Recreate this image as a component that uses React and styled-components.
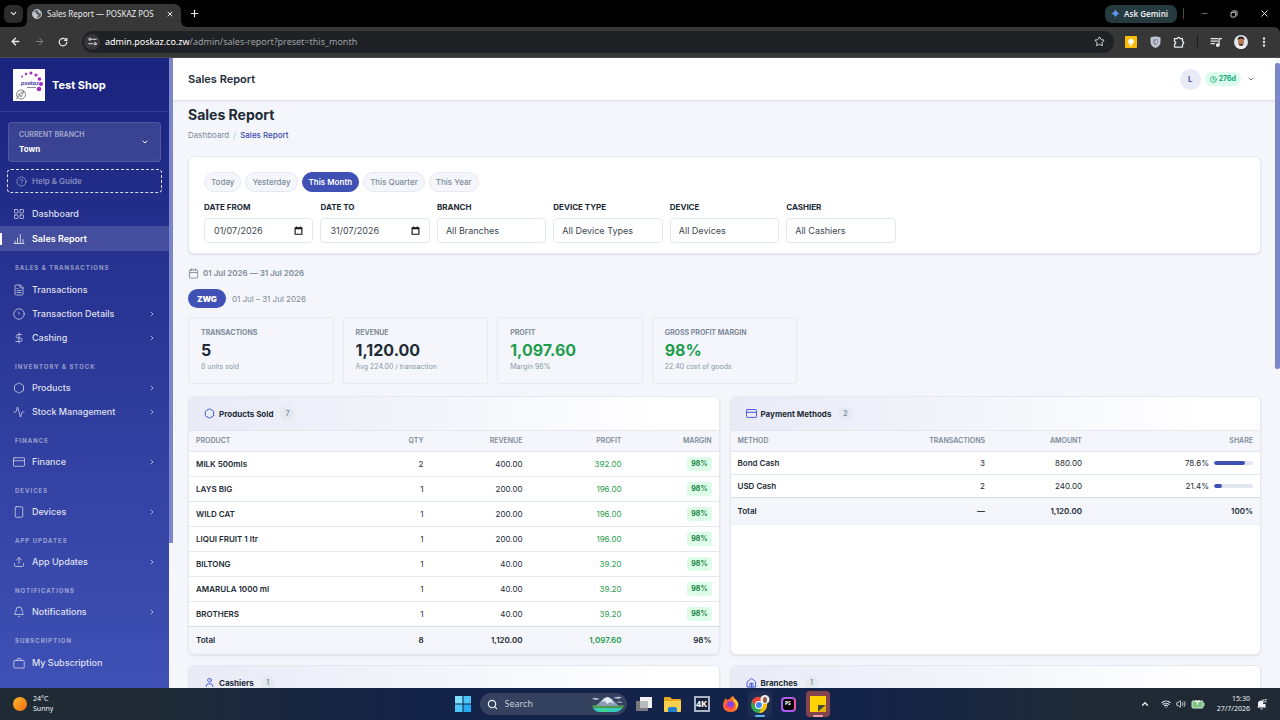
import React from 'react';
import styled, {createGlobalStyle, css} from 'styled-components';
import {
  Activity,
  ArrowLeft,
  ArrowRight,
  Bell,
  Calendar,
  ChevronDown,
  ChevronRight,
  ChevronUp,
  CircleHelp,
  Clock,
  DollarSign,
  EllipsisVertical,
  FileText,
  Hexagon,
  LayoutGrid,
  Minus,
  Plus,
  RotateCw,
  Search,
  Star,
  Upload,
  User,
  Volume2,
  Wifi,
  X,
} from 'lucide-react';

const GlobalStyle = createGlobalStyle`
  * {
    box-sizing: border-box;
  }

  body {
    margin: 0;
    font-family: Inter, 'Liberation Sans', sans-serif;
    font-size: 8px;
    line-height: 12px;
    color: #212b36;
    overflow: hidden;
  }

  button, input, select {
    font: inherit;
    color: inherit;
  }

  button {
    border: 0;
    padding: 0;
    background: none;
  }

  a {
    color: inherit;
    text-decoration: none;
  }

  svg {
    display: block;
    flex: none;
  }
`;

const Screen = styled.div`
  height: 100vh;
  display: flex;
  flex-direction: column;
`;

/* Browser */

const TabStrip = styled.div`
  display: flex;
  align-items: center;
  height: 27px;
  flex: none;
  padding: 0 10px 0 4px;
  background: #000;
  color: #e8eaed;
  font-family: 'Noto Sans', sans-serif;
`;

const TabSearch = styled.button`
  display: grid;
  place-items: center;
  width: 19px;
  height: 18px;
  border-radius: 6px;
  background: #2c2c2c;
`;

const Tab = styled.div`
  position: relative;
  align-self: flex-end;
  display: flex;
  align-items: center;
  gap: 5px;
  width: 154px;
  height: 23px;
  margin-left: 4px;
  padding: 0 7px 3px 5px;
  border-radius: 7px 7px 0 0;
  background: #373737;

  &::before, &::after {
    content: '';
    position: absolute;
    bottom: 0;
    width: 6px;
    height: 6px;
  }

  &::before {
    right: 100%;
    background: radial-gradient(circle at 0 0, #000 6px, #373737 6px);
  }

  &::after {
    left: 100%;
    background: radial-gradient(circle at 100% 0, #000 6px, #373737 6px);
  }
`;

const TabTitle = styled.span`
  flex: 1;
  white-space: nowrap;
`;

const IconButton = styled.button`
  display: grid;
  place-items: center;
  width: ${({$width}) => $width || 12}px;
  height: 18px;
`;

const Grow = styled.div`
  flex: 1;
`;

const Gemini = styled.button`
  display: flex;
  align-items: center;
  gap: 4px;
  height: 18px;
  margin-right: 6px;
  padding: 0 9px 0 6px;
  border-radius: 7px;
  background: #253b40;
  font-weight: 600;
`;

const Divider = styled.i`
  width: 1px;
  height: 11px;
  background: ${({$color}) => $color};
`;

const WindowButtons = styled.div`
  display: flex;
  gap: 18px;
  margin-left: 14px;
`;

const Toolbar = styled.div`
  display: flex;
  align-items: center;
  height: 31px;
  flex: none;
  padding: 0 10px 1px 9px;
  border-bottom: 1px solid #4a4a4a;
  border-top-right-radius: 6px;
  background: #373737;
  color: #e8eaed;
  font-family: 'Noto Sans', sans-serif;
`;

const BrowserBar = styled.div`
  flex: none;
  background: #000;
`;

const NavButtons = styled.div`
  display: flex;
  gap: 12px;
  margin-right: 13px;
`;

const AddressBar = styled.div`
  flex: 1;
  display: flex;
  align-items: center;
  height: 22px;
  padding: 0 9px 0 2px;
  border-radius: 11px;
  background: #202124;
`;

const SiteInfo = styled.button`
  display: grid;
  place-items: center;
  width: 16px;
  height: 16px;
  margin-right: 5px;
  border-radius: 50%;
  background: #373737;
`;

const Url = styled.span`
  flex: 1;
  font-size: 9px;
  color: #9aa0a6;

  b {
    font-weight: 400;
    color: #fff;
  }
`;

const Extensions = styled.div`
  display: flex;
  align-items: center;
  gap: 12px;
  margin-left: 11px;
`;

/* App shell */

const Shell = styled.div`
  flex: 1;
  min-height: 0;
  display: flex;
  background: #f4f6fb;
`;

const Sidebar = styled.aside`
  width: 169px;
  flex: none;
  overflow: hidden;
  background: linear-gradient(180deg, #1a237e 0%, #3f51b5 100%);
  color: #fff;
`;

const ScrollTrack = styled.div`
  width: ${({$width}) => $width}px;
  flex: none;
  padding-top: ${({$top}) => $top || 0}px;
`;

const ScrollThumb = styled.div`
  height: ${({$size}) => $size}%;
  border-radius: ${({$round}) => $round || 0}px;
  background: #7b86cb;
`;

const Brand = styled.div`
  display: flex;
  align-items: center;
  gap: 7px;
  height: 54px;
  padding: 0 13px;
  border-bottom: 1px solid rgba(255, 255, 255, 0.1);
  font-size: 11px;
  font-weight: 700;
`;

const BranchSwitch = styled.button`
  display: flex;
  align-items: center;
  justify-content: space-between;
  width: 153px;
  height: 40px;
  margin: 10px 8px 0;
  padding: 0 11px 0 10px;
  border: 1px solid rgba(255, 255, 255, 0.12);
  border-radius: 4px;
  background: rgba(255, 255, 255, 0.12);
  text-align: left;
`;

const BranchLabel = styled.span`
  display: block;
  font-size: 7px;
  font-weight: 600;
  line-height: 14px;
  text-transform: uppercase;
  color: rgba(255, 255, 255, 0.55);
`;

const BranchName = styled.span`
  display: block;
  font-weight: 700;
  line-height: 14px;
`;

const Help = styled.a`
  display: flex;
  align-items: center;
  gap: 5px;
  height: 24px;
  margin: 7px 7px 0;
  padding: 0 8px;
  border: 1px dashed rgba(255, 255, 255, 0.85);
  border-radius: 4px;
  font-weight: 600;
  color: rgba(255, 255, 255, 0.45);
`;

const Nav = styled.nav`
  padding-top: 8px;
`;

const NavSection = styled.h2`
  margin: 0;
  padding: 12px 15px 4px;
  font-size: 6px;
  font-weight: 700;
  line-height: 10px;
  letter-spacing: 1px;
  text-transform: uppercase;
  color: rgba(255, 255, 255, 0.5);
`;

const NavItem = styled.a`
  display: flex;
  align-items: center;
  gap: 7px;
  height: ${({$expands}) => ($expands ? 24 : 25)}px;
  padding: 0 13px 0 13px;
  font-size: 9px;
  font-weight: 500;
  color: rgba(255, 255, 255, 0.85);

  span {
    flex: 1;
  }

  ${({$active}) => $active && css`
    background:
      linear-gradient(#fff, #fff) left center / 2px 12px no-repeat,
      rgba(255, 255, 255, 0.15);
    font-weight: 600;
    color: #fff;
  `}
`;

const Page = styled.div`
  flex: 1;
  min-width: 0;
  overflow: hidden;
`;

const TopBar = styled.header`
  display: flex;
  align-items: center;
  height: 43px;
  padding: 0 20px 0 15px;
  border-bottom: 1px solid #e3e6ec;
  background: #fff;
  box-shadow: 0 1px 2px rgba(33, 43, 54, 0.06);
  font-size: 11px;
  font-weight: 600;
`;

const Avatar = styled.span`
  display: grid;
  place-items: center;
  width: 21px;
  height: 21px;
  margin-right: 4px;
  border-radius: 50%;
  background: #e8eaf6;
  font-size: 8px;
  color: #3949ab;
`;

const DaysLeft = styled.span`
  display: flex;
  align-items: center;
  gap: 2px;
  height: 14px;
  margin-right: 6px;
  padding: 0 5px;
  border-radius: 7px;
  background: #dcfaed;
  font-size: 7px;
  font-weight: 700;
  color: #12a672;
`;

const Main = styled.main`
  padding: 5px 14px 0 15px;
`;

const Heading = styled.h1`
  margin: 0;
  font-size: 14px;
  font-weight: 700;
  line-height: 18px;
`;

const Breadcrumb = styled.div`
  display: flex;
  gap: 4px;
  margin-top: 5px;
  color: #7d8b99;

  i {
    color: #b4bcc6;
    font-style: normal;
  }

  a:last-child {
    font-weight: 500;
    color: #3949ab;
  }
`;

const card = css`
  border: 1px solid #e6e9f0;
  border-radius: 6px;
  background: #fff;
  box-shadow: 0 1px 2px rgba(33, 43, 54, 0.1);
`;

const Filters = styled.form`
  ${card}
  margin-top: 15px;
  padding: 15px 15px 10px;
`;

const Presets = styled.div`
  display: flex;
  gap: 4px;
  margin-bottom: 9px;
`;

const Preset = styled.button`
  height: 20px;
  padding: 0 6px;
  border: 1px solid ${({$active}) => ($active ? '#3f51b5' : '#e6e9f0')};
  border-radius: 10px;
  background: ${({$active}) => ($active ? '#3f51b5' : '#f4f6fb')};
  font-weight: ${({$active}) => ($active ? 600 : 500)};
  color: ${({$active}) => ($active ? '#fff' : '#7d8b99')};
`;

const Fields = styled.div`
  display: grid;
  grid-template-columns: repeat(auto-fill, minmax(104px, 1fr));
  gap: 7px;
`;

const Field = styled.label`
  display: flex;
  flex-direction: column;
  gap: 5px;
  font-weight: 700;
  text-transform: uppercase;
`;

const control = css`
  width: 100%;
  min-width: 0;
  height: 25px;
  padding: 0 8px;
  border: 1px solid #e3e7ee;
  border-radius: 4px;
  background: #fff;
  font-size: 9px;
  font-weight: 400;
  color: #3c4752;
`;

const Select = styled.select`
  ${control}
  appearance: none;
`;

const DateBox = styled.span`
  ${control}
  display: flex;
  align-items: center;
  padding: 0 9px;

  input {
    flex: 1;
    min-width: 0;
    padding: 0;
    border: 0;
    outline: 0;
    background: none;
  }
`;

const Period = styled.p`
  display: flex;
  align-items: center;
  gap: 4px;
  margin: 13px 0 10px;
  font-weight: 600;
  color: #7d8b99;
`;

const CurrencyRow = styled.div`
  display: flex;
  align-items: center;
  gap: 6px;
  color: #7d8b99;
`;

const Currency = styled.button`
  height: 19px;
  padding: 0 9px;
  border-radius: 10px;
  background: #3f51b5;
  font-weight: 900;
  color: #fff;
`;

const Stats = styled.div`
  display: grid;
  grid-template-columns: repeat(auto-fill, minmax(140px, 1fr));
  gap: 9px;
  margin: 9px 0 12px;
`;

const Stat = styled.div`
  padding: 10px 12px 11px;
  border: 1px solid #e6e9f0;
  border-radius: 3px;
  font-size: 7px;
  line-height: 10px;
  color: #8a97a5;
`;

const StatLabel = styled.div`
  font-weight: 700;
  text-transform: uppercase;
  color: #7d8b99;
`;

const StatValue = styled.div`
  margin: 2px 0;
  font-size: 16px;
  font-weight: 700;
  line-height: 20px;
  color: ${({$good}) => ($good ? '#1f9d4d' : '#212b36')};
`;

const Panels = styled.div`
  display: grid;
  grid-template-columns: 1fr 1fr;
  gap: 10px;
`;

const Panel = styled.section`
  ${card}
  overflow: hidden;
`;

const PanelHead = styled.div`
  display: flex;
  align-items: center;
  gap: 4px;
  height: 33px;
  padding: 0 15px;
  background: linear-gradient(90deg, #e8eaf6 0%, #fff 90%);

  h3 {
    margin: 0;
    font-size: 8px;
    font-weight: 700;
  }

  svg {
    color: #3f51d5;
  }
`;

const Count = styled.span`
  min-width: 14px;
  height: 13px;
  margin-left: 3px;
  border-radius: 7px;
  background: #e4e9f0;
  font-size: 7px;
  font-weight: 600;
  line-height: 13px;
  text-align: center;
  color: #7d8b99;
`;

const Table = styled.table`
  width: 100%;
  table-layout: fixed;
  border-collapse: collapse;

  th, td {
    padding: 5px 7px;
    border-top: 1px solid #e3e7ee;
    text-align: right;
  }

  th:first-child, td:first-child {
    text-align: left;
  }

  td:first-child {
    font-weight: 600;
  }

  thead th {
    background: #f4f6fb;
    font-size: 7px;
    font-weight: 600;
    line-height: 10px;
    text-transform: uppercase;
    color: #7d8b99;
  }

  tfoot td {
    padding: 7px;
    border-top-color: #d5dae3;
    border-bottom: 1px solid #edf0f5;
    background: #f4f6fb;
    font-weight: 600;
  }
`;

const Col = styled.col`
  width: ${({$width}) => $width}px;
`;

const Profit = styled.span`
  color: #1f9d4d;
`;

const Badge = styled.span`
  display: inline-block;
  height: 14px;
  padding: 0 4px;
  border-radius: 3px;
  background: #dcfce7;
  font-size: 7px;
  font-weight: 700;
  line-height: 14px;
  vertical-align: top;
  color: #15803d;
`;

const Share = styled.div`
  display: flex;
  align-items: center;
  justify-content: flex-end;
  gap: 5px;
`;

const Meter = styled.div`
  width: 39px;
  height: 4px;
  border-radius: 2px;
  overflow: hidden;
  background: #e0e5ee;
`;

const MeterFill = styled.div`
  height: 100%;
  border-radius: 2px;
  background: #3f51b5;
`;

/* Taskbar */

const Taskbar = styled.footer`
  display: grid;
  grid-template-columns: 1fr auto 1fr;
  align-items: center;
  height: 32px;
  flex: none;
  padding: 0 13px;
  background: linear-gradient(90deg, #1f2a35 12%, #13234a 34%, #13234a 66%, #1f2a35 85%);
  font-family: 'Noto Sans', sans-serif;
  font-size: 7px;
  line-height: 10px;
  color: #f0f2f5;
`;

const Weather = styled.div`
  display: flex;
  align-items: center;
  gap: 6px;
`;

const Apps = styled.div`
  display: flex;
  align-items: center;
  gap: 5px;
`;

const AppButton = styled.button`
  position: relative;
  display: grid;
  place-items: center;
  width: 24px;
  height: 26px;
  border-radius: 4px;
  background: ${({$bg}) => $bg || 'none'};

  ${({$bar}) => $bar && css`
    &::after {
      content: '';
      position: absolute;
      bottom: 0;
      left: 7px;
      right: 7px;
      height: 2px;
      border-radius: 1px;
      background: ${$bar};
    }
  `}
`;

const SearchBox = styled.label`
  display: flex;
  align-items: center;
  gap: 7px;
  width: 147px;
  height: 22px;
  padding: 0 2px 0 7px;
  border-radius: 11px;
  background: #34425f;

  input {
    flex: 1;
    min-width: 0;
    padding: 0;
    border: 0;
    outline: 0;
    background: none;
    font-size: 9px;
  }

  input::placeholder {
    color: #c6cddb;
    opacity: 1;
  }
`;

const FourK = styled.span`
  display: grid;
  place-items: center;
  width: 16px;
  height: 16px;
  border: 2px solid #a9b4c6;
  background: #16223c;
  font-size: 9px;
  font-weight: 700;
  color: #fff;
`;

const Storm = styled.span`
  width: 15px;
  height: 15px;
  padding: 1px 2px;
  border: 2px solid #b05cf5;
  border-right-color: #f052b0;
  border-radius: 4px;
  background: #000;
  font-size: 5px;
  font-weight: 700;
  line-height: 6px;
  text-align: left;
  color: #fff;
`;

const Tray = styled.div`
  display: flex;
  align-items: center;
  justify-content: flex-end;
  gap: 5px;
`;

const TrayToggle = styled.button`
  margin-right: 6px;
`;

const DateTime = styled.div`
  margin: 0 1px 0 7px;
  text-align: right;
`;

/* Icons the packages lack */

const Svg = ({size = 12, children, ...rest}) => (
  <svg
    width={size}
    height={size}
    viewBox="0 0 24 24"
    fill="none"
    stroke="currentColor"
    strokeWidth="1.8"
    strokeLinecap="round"
    strokeLinejoin="round"
    aria-hidden="true"
    {...rest}
  >
    {children}
  </svg>
);

const BarsIcon = (props) => (
  <Svg {...props}>
    <path d="M2 21h20M4 21v-5M9 21V10M14.500 21V3M20 21v-8" />
  </Svg>
);

const DetailsIcon = (props) => (
  <Svg {...props}>
    <circle cx="12" cy="12" r="10.500" />
    <path d="M12 8v4" />
  </Svg>
);

const CardIcon = (props) => (
  <Svg {...props}>
    <rect x="1" y="3.500" width="22" height="17" rx="1.500" />
    <path d="M1 9.500h22" />
  </Svg>
);

const DeviceIcon = (props) => (
  <Svg {...props}>
    <rect x="4.500" y="1.500" width="15" height="21" rx="2" />
  </Svg>
);

const CaseIcon = (props) => (
  <Svg {...props}>
    <rect x="1.500" y="7" width="21" height="15" rx="2" />
    <path d="M8 7V5a2 2 0 0 1 2-2h4a2 2 0 0 1 2 2v2" />
  </Svg>
);

const HomeIcon = (props) => (
  <Svg {...props}>
    <path d="M3 10.500 12 3l9 7.500V22H3z" />
    <path d="M8.500 22v-8.500h7V22M12 14v8" />
  </Svg>
);

const CalendarDateIcon = () => (
  <Svg size={9} stroke="#111" strokeWidth="3" strokeLinecap="butt" strokeLinejoin="miter">
    <path d="M3 5h18v17H3zM3 7h18M7 1v4M17 1v4" />
  </Svg>
);

const GlobeIcon = () => (
  <svg width="10" height="10" viewBox="0 0 20 20" aria-hidden="true">
    <circle cx="10" cy="10" r="9" fill="#5f6368" stroke="#c4c7cb" strokeWidth="2" />
    <path d="M3 6c4-1 5 1 5 3s4 1 4 4-3 3-4 6c-4-1-6-5-6-8zM11 2c0 3 2 3 3 5s4 1 4 2c0-4-3-7-7-7z" fill="#c4c7cb" />
  </svg>
);

const TuneIcon = () => (
  <Svg size={9} strokeWidth="2.500">
    <circle cx="5" cy="6" r="3" />
    <path d="M12 6h10M2 18h10" />
    <circle cx="19" cy="18" r="3" />
  </Svg>
);

const RestoreIcon = () => (
  <Svg size={8} strokeWidth="2.500">
    <rect x="3" y="7" width="14" height="14" rx="2" />
    <path d="M8 3h11a2 2 0 0 1 2 2v11" />
  </Svg>
);

const GeminiIcon = () => (
  <svg width="9" height="9" viewBox="0 0 24 24" aria-hidden="true">
    <path d="M12 0c1 6 5 11 12 12H12z" fill="#ea6a5e" />
    <path d="M24 12c-6 1-11 5-12 12V12z" fill="#4285f4" />
    <path d="M12 24c-1-6-5-11-12-12h12z" fill="#34a853" />
    <path d="M0 12C6 11 11 7 12 0v12z" fill="#6d9bf5" />
    <path d="m12 4 8 8-8 8-8-8z" fill="#5c93f5" />
  </svg>
);

const KeepIcon = () => (
  <svg width="12" height="12" viewBox="0 0 24 24" aria-hidden="true">
    <rect width="24" height="24" rx="2" fill="#fbbc04" />
    <circle cx="12" cy="11" r="5.500" fill="#fff" />
    <path d="M9.500 17h5v3h-5z" fill="#fff" />
  </svg>
);

const ShieldIcon = () => (
  <svg width="11" height="12" viewBox="0 0 22 24" aria-hidden="true">
    <path d="M1 3q10-4 20 0v9q0 8-10 12Q1 20 1 12z" fill="#c3c7d4" />
    <path d="M6 7q5-2 10 0v5q0 5-5 7-5-2-5-7z" fill="#8c92a6" />
    <path d="M11 9v7q3-1 3-4V9z" fill="#d5d8e2" />
  </svg>
);

const PuzzleIcon = () => (
  <Svg strokeWidth="2.500">
    <path d="M3 5h6a2.500 2.500 0 0 1 5 0h5v6a2.500 2.500 0 0 1 0 5v6H3v-6a2.500 2.500 0 0 0 0-5z" />
  </Svg>
);

const MediaIcon = () => (
  <Svg strokeWidth="2.500">
    <path d="M2 5h13M2 10h13M2 15h7M18 18V5h5" />
    <circle cx="15.500" cy="18" r="2.500" fill="currentColor" />
  </Svg>
);

const Face = ({size = 14}) => (
  <svg width={size} height={size} viewBox="0 0 28 28" aria-hidden="true">
    <circle cx="14" cy="14" r="14" fill="#dfe6ec" />
    <path d="M4 24q10-8 20 0-10 8-20 0z" fill="#f4f4f2" />
    <ellipse cx="14" cy="13" rx="6" ry="8" fill="#b87a58" />
    <path d="M7 10q0-7 7-7t7 7q-3-3-7-3t-7 3z" fill="#33231c" />
    <path d="M9 17q5 3 10 0-1 5-5 5t-5-5z" fill="#4d2c20" />
  </svg>
);

const ShopLogo = () => (
  <svg width="32" height="32" viewBox="0 0 32 32" aria-label="POSKAZ">
    <rect width="32" height="32" fill="#fff" />
    <g fill="#a32cc4">
      <circle cx="9" cy="7.500" r="1" />
      <circle cx="13" cy="5" r="1.200" />
      <circle cx="18" cy="4" r="1.500" />
      <circle cx="23" cy="6" r="1.600" />
      <circle cx="26.500" cy="10" r="1.800" />
      <circle cx="28" cy="15" r="2" />
      <circle cx="26" cy="20" r="2.300" />
    </g>
    <text x="8" y="16" fontSize="5" fontWeight="700" fontStyle="italic" fill="#4a3aa0">poskaz</text>
    <path d="M14 18.500h9" stroke="#8a86a8" strokeWidth="1" />
    <circle cx="8" cy="25.500" r="4.500" fill="none" stroke="#666" strokeWidth="0.8" />
    <path d="m5 26 6-4-3 6-1-2zM3 30l3-3" fill="none" stroke="#666" strokeWidth="0.8" />
  </svg>
);

const SunIcon = () => (
  <svg width="14" height="14" viewBox="0 0 14 14" aria-hidden="true">
    <defs>
      <linearGradient id="sun" x1="0" y1="0" x2="1" y2="1">
        <stop offset="0" stopColor="#fdbb2d" />
        <stop offset="1" stopColor="#f26a10" />
      </linearGradient>
    </defs>
    <circle cx="7" cy="7" r="7" fill="url(#sun)" />
  </svg>
);

const WindowsIcon = () => (
  <svg width="16" height="16" viewBox="0 0 16 16" aria-hidden="true">
    <path d="M0 0h7.500v7.500H0z" fill="#7be0fc" />
    <path d="M8.500 0H16v7.500H8.500zM0 8.500h7.500V16H0z" fill="#4cc7f7" />
    <path d="M8.500 8.500H16V16H8.500z" fill="#27aaf2" />
  </svg>
);

const Scenery = () => (
  <svg width="34" height="18" viewBox="0 0 34 18" aria-hidden="true">
    <path d="M2 12h30q-3 5-8 5H9q-6 0-7-5z" fill="#35c9c0" />
    <path d="M1 11q4-2 8-1l16 1 7-1q2 2-1 3H6q-5 0-5-2z" fill="#4f9a4a" />
    <path d="m5 11 8-8 4-1 4 2 7 7z" fill="#8d9db5" />
    <path d="m10 7 4-4 3-1 3 2 3 5-4-2-3 2-2-3z" fill="#e4ebf3" />
    <path d="M1 4q2-2 5-1l3 1-4 1zM22 3q4-2 9-1l-3 2zM25 7q3-1 7 0l-3 1z" fill="#aeb9c9" />
    <path d="M7 15q5-2 12 0l-5 2z" fill="#3ddc84" />
  </svg>
);

const TaskViewIcon = () => (
  <svg width="16" height="14" viewBox="0 0 16 14" aria-hidden="true">
    <path d="M4 0h12v11H4z" fill="#f1f1f1" />
    <path d="M0 4h12v10H0z" fill="#77797d" />
    <path d="M4 4h8v7H4z" fill="#b9babd" />
  </svg>
);

const FolderIcon = () => (
  <svg width="17" height="15" viewBox="0 0 17 15" aria-hidden="true">
    <path d="M0 1q0-1 1-1h5l2 2h8q1 0 1 1v11H0z" fill="#e8a820" />
    <path d="M0 4h17v10q0 1-1 1H1q-1 0-1-1z" fill="#fcd04f" />
    <path d="M4 15v-3q0-2 2-2h5q2 0 2 2v3z" fill="#1f7fd0" />
  </svg>
);

const FirefoxIcon = () => (
  <svg width="16" height="16" viewBox="0 0 16 16" aria-hidden="true">
    <path d="M1 5q1-2 2-3 0 1 1 2 2-1 3-1 0-2 3-3 0 2 3 4 3 3 2 6-1 6-7 6-7 0-8-6 0-3 1-5z" fill="#ff6a2b" />
    <path d="M10 0q0 2 3 4 3 3 2 6-1 3-3 4 2-4 0-7-3-3-2-7z" fill="#ffc531" />
    <circle cx="7.500" cy="8.500" r="3.600" fill="#8a3fe0" />
    <path d="M1 8q2 0 4 2t5 1q-1 3-4 2-4-1-5-5z" fill="#ff3f5c" />
  </svg>
);

const ChromeIcon = () => (
  <svg width="20" height="18" viewBox="0 0 20 18" aria-hidden="true">
    <circle cx="9" cy="10" r="8" fill="#34a853" />
    <path d="M2 6a8 8 0 0 1 14 0H9L5.500 12z" fill="#ea4335" />
    <path d="M16 6a8 8 0 0 1-7 12l4-7-1-5z" fill="#fbbc04" />
    <circle cx="9" cy="10" r="4" fill="#fff" />
    <circle cx="9" cy="10" r="3" fill="#4285f4" />
    <circle cx="15" cy="4.500" r="4.500" fill="#f1efec" />
    <ellipse cx="15" cy="5" rx="2" ry="3" fill="#8a5a42" />
  </svg>
);

const NoteIcon = () => (
  <svg width="16" height="16" viewBox="0 0 16 16" aria-hidden="true">
    <path d="M0 0h16v16H0z" fill="#fdd308" />
    <path d="M8 16V9h8z" fill="#4a4a3c" />
    <path d="M8 16 16 9v7z" fill="#e6b400" />
  </svg>
);

const BatteryIcon = () => (
  <svg width="14" height="10" viewBox="0 0 14 10" aria-hidden="true">
    <rect x="1" y="2" width="11" height="7" rx="1" fill="#7cc481" stroke="#d4ecd4" />
    <path d="M13 4v3" stroke="#d4ecd4" />
    <path d="M5 1v2h3V1M6.500 3v3" fill="none" stroke="#fff" />
  </svg>
);

const BellSnoozeIcon = () => (
  <svg width="11" height="11" viewBox="0 0 22 22" aria-hidden="true">
    <path d="M4 15V9q0-6 7-6 2 0 3 1v6h5v5l2 2H2z" fill="#f0f2f5" />
    <path d="M8 19h6q-1 2-3 2t-3-2z" fill="#f0f2f5" />
    <path d="M12 2h4l-4 5h4M17 1h4l-4 5h4" fill="none" stroke="#f0f2f5" strokeWidth="1.5" />
  </svg>
);

const NAV = [
  {
    items: [
      {label: 'Dashboard', icon: LayoutGrid},
      {label: 'Sales Report', icon: BarsIcon, active: true},
    ],
  },
  {
    title: 'Sales & Transactions',
    items: [
      {label: 'Transactions', icon: FileText},
      {label: 'Transaction Details', icon: DetailsIcon, expands: true},
      {label: 'Cashing', icon: DollarSign, expands: true},
    ],
  },
  {
    title: 'Inventory & Stock',
    items: [
      {label: 'Products', icon: Hexagon, expands: true},
      {label: 'Stock Management', icon: Activity, expands: true},
    ],
  },
  {title: 'Finance', items: [{label: 'Finance', icon: CardIcon, expands: true}]},
  {title: 'Devices', items: [{label: 'Devices', icon: DeviceIcon, expands: true}]},
  {title: 'App Updates', items: [{label: 'App Updates', icon: Upload, expands: true}]},
  {title: 'Notifications', items: [{label: 'Notifications', icon: Bell, expands: true}]},
  {title: 'Subscription', items: [{label: 'My Subscription', icon: CaseIcon}]},
];

const PRESETS = ['Today', 'Yesterday', 'This Month', 'This Quarter', 'This Year'];

const SELECTS = [
  ['Branch', 'All Branches'],
  ['Device Type', 'All Device Types'],
  ['Device', 'All Devices'],
  ['Cashier', 'All Cashiers'],
];

const STATS = [
  {label: 'Transactions', value: '5', note: '8 units sold'},
  {label: 'Revenue', value: '1,120.00', note: 'Avg 224.00 / transaction'},
  {label: 'Profit', value: '1,097.60', note: 'Margin 98%', good: true},
  {label: 'Gross Profit Margin', value: '98%', note: '22.40 cost of goods', good: true},
];

const PRODUCTS = [
  ['MILK 500mls', 2, '400.00', '392.00'],
  ['LAYS BIG', 1, '200.00', '196.00'],
  ['WILD CAT', 1, '200.00', '196.00'],
  ['LIQUI FRUIT 1 ltr', 1, '200.00', '196.00'],
  ['BILTONG', 1, '40.00', '39.20'],
  ['AMARULA 1000 ml', 1, '40.00', '39.20'],
  ['BROTHERS', 1, '40.00', '39.20'],
];

const PAYMENTS = [
  ['Bond Cash', 3, '880.00', 78.6],
  ['USD Cash', 2, '240.00', 21.4],
];

function Browser() {
  return (
    <BrowserBar>
      <TabStrip>
        <TabSearch aria-label="Search tabs"><ChevronDown size={9} strokeWidth={3} /></TabSearch>
        <Tab>
          <GlobeIcon />
          <TabTitle>Sales Report — POSKAZ POS</TabTitle>
          <X size={8} strokeWidth={3} />
        </Tab>
        <IconButton aria-label="New tab" $width={26}><Plus size={11} strokeWidth={2.5} /></IconButton>
        <Grow />
        <Gemini><GeminiIcon />Ask Gemini</Gemini>
        <Divider $color="#4a4a4a" />
        <WindowButtons>
          <IconButton aria-label="Minimize"><Minus size={9} color="#8a8a8a" /></IconButton>
          <IconButton aria-label="Restore"><RestoreIcon /></IconButton>
          <IconButton aria-label="Close"><X size={11} strokeWidth={2} /></IconButton>
        </WindowButtons>
      </TabStrip>
      <Toolbar>
        <NavButtons>
          <IconButton aria-label="Back"><ArrowLeft size={11} strokeWidth={3} /></IconButton>
          <IconButton aria-label="Forward"><ArrowRight size={11} color="#85888c" /></IconButton>
          <IconButton aria-label="Reload"><RotateCw size={10} strokeWidth={3} /></IconButton>
        </NavButtons>
        <AddressBar>
          <SiteInfo aria-label="Site information"><TuneIcon /></SiteInfo>
          <Url><b>admin.poskaz.co.zw</b>/admin/sales-report?preset=this_month</Url>
          <Star size={11} />
        </AddressBar>
        <Extensions>
          <IconButton aria-label="Keep"><KeepIcon /></IconButton>
          <IconButton aria-label="Shield"><ShieldIcon /></IconButton>
          <IconButton aria-label="Extensions"><PuzzleIcon /></IconButton>
          <Divider $color="#16181a" />
          <IconButton aria-label="Media"><MediaIcon /></IconButton>
          <IconButton aria-label="Profile"><Face /></IconButton>
          <IconButton aria-label="Menu"><EllipsisVertical size={12} strokeWidth={3} /></IconButton>
        </Extensions>
      </Toolbar>
    </BrowserBar>
  );
}

function SideMenu() {
  return (
    <Sidebar>
      <Brand><ShopLogo />Test Shop</Brand>
      <BranchSwitch>
        <span>
          <BranchLabel>Current Branch</BranchLabel>
          <BranchName>Town</BranchName>
        </span>
        <ChevronDown size={8} strokeWidth={3} />
      </BranchSwitch>
      <Help href="#help"><CircleHelp size={11} />Help &amp; Guide</Help>
      <Nav>
        {NAV.map(({title, items}) => (
          <React.Fragment key={title || 'main'}>
            {title && <NavSection>{title}</NavSection>}
            {items.map(({label, icon: Icon, active, expands}) => (
              <NavItem key={label} href="#nav" $active={active} $expands={expands}>
                <Icon size={12} strokeWidth={1.8} opacity={0.8} />
                <span>{label}</span>
                {expands && <ChevronRight size={8} strokeWidth={2} />}
              </NavItem>
            ))}
          </React.Fragment>
        ))}
      </Nav>
    </Sidebar>
  );
}

function FilterCard() {
  return (
    <Filters>
      <Presets>
        {PRESETS.map((name) => (
          <Preset key={name} type="button" $active={name === 'This Month'}>{name}</Preset>
        ))}
      </Presets>
      <Fields>
        <Field>
          Date From
          <DateBox><input defaultValue="01/07/2026" /><CalendarDateIcon /></DateBox>
        </Field>
        <Field>
          Date To
          <DateBox><input defaultValue="31/07/2026" /><CalendarDateIcon /></DateBox>
        </Field>
        {SELECTS.map(([label, value]) => (
          <Field key={label}>
            {label}
            <Select><option>{value}</option></Select>
          </Field>
        ))}
      </Fields>
    </Filters>
  );
}

function PanelTitle({icon: Icon, count, children}) {
  return (
    <PanelHead>
      <Icon size={11} strokeWidth={2} />
      <h3>{children}</h3>
      <Count>{count}</Count>
    </PanelHead>
  );
}

function ProductsPanel() {
  return (
    <Panel>
      <PanelTitle icon={Hexagon} count={7}>Products Sold</PanelTitle>
      <Table>
        <colgroup>
          <col />
          <Col $width={60} />
          <Col $width={99} />
          <Col $width={99} />
          <Col $width={90} />
        </colgroup>
        <thead>
          <tr><th>Product</th><th>Qty</th><th>Revenue</th><th>Profit</th><th>Margin</th></tr>
        </thead>
        <tbody>
          {PRODUCTS.map(([name, qty, revenue, profit]) => (
            <tr key={name}>
              <td>{name}</td>
              <td>{qty}</td>
              <td>{revenue}</td>
              <td><Profit>{profit}</Profit></td>
              <td><Badge>98%</Badge></td>
            </tr>
          ))}
        </tbody>
        <tfoot>
          <tr><td>Total</td><td>8</td><td>1,120.00</td><td><Profit>1,097.60</Profit></td><td>98%</td></tr>
        </tfoot>
      </Table>
    </Panel>
  );
}

function PaymentsPanel() {
  return (
    <Panel>
      <PanelTitle icon={CardIcon} count={2}>Payment Methods</PanelTitle>
      <Table>
        <colgroup>
          <col />
          <Col $width={100} />
          <Col $width={97} />
          <Col $width={171} />
        </colgroup>
        <thead>
          <tr><th>Method</th><th>Transactions</th><th>Amount</th><th>Share</th></tr>
        </thead>
        <tbody>
          {PAYMENTS.map(([name, count, amount, share]) => (
            <tr key={name}>
              <td>{name}</td>
              <td>{count}</td>
              <td>{amount}</td>
              <td>
                <Share>
                  {share}%
                  <Meter><MeterFill style={{width: `${share}%`}} /></Meter>
                </Share>
              </td>
            </tr>
          ))}
        </tbody>
        <tfoot>
          <tr><td>Total</td><td>—</td><td>1,120.00</td><td>100%</td></tr>
        </tfoot>
      </Table>
    </Panel>
  );
}

function Desktop() {
  return (
    <Taskbar>
      <Weather>
        <SunIcon />
        <div>24°C<br />Sunny</div>
      </Weather>
      <Apps>
        <AppButton aria-label="Start"><WindowsIcon /></AppButton>
        <SearchBox>
          <Search size={11} strokeWidth={2.5} />
          <input placeholder="Search" />
          <Scenery />
        </SearchBox>
        <AppButton aria-label="Task view"><TaskViewIcon /></AppButton>
        <AppButton aria-label="Files"><FolderIcon /></AppButton>
        <AppButton aria-label="Video"><FourK>4K</FourK></AppButton>
        <AppButton aria-label="Firefox"><FirefoxIcon /></AppButton>
        <AppButton aria-label="Chrome" $bg="#1e2d52" $bar="#5fb4ee"><ChromeIcon /></AppButton>
        <AppButton aria-label="PhpStorm"><Storm>PS</Storm></AppButton>
        <AppButton aria-label="Notes" $bg="#84454f" $bar="#f0a0a0"><NoteIcon /></AppButton>
      </Apps>
      <Tray>
        <TrayToggle aria-label="Show hidden icons"><ChevronUp size={10} strokeWidth={3} /></TrayToggle>
        <Wifi size={10} strokeWidth={2.5} />
        <Volume2 size={10} />
        <BatteryIcon />
        <DateTime>15:30<br />27/7/2026</DateTime>
        <BellSnoozeIcon />
      </Tray>
    </Taskbar>
  );
}

export default function App() {
  return (
    <Screen>
      <GlobalStyle />
      <Browser />
      <Shell>
        <SideMenu />
        <ScrollTrack $width={4}><ScrollThumb $size={77} /></ScrollTrack>
        <Page>
          <TopBar>
            Sales Report
            <Grow />
            <Avatar>L</Avatar>
            <DaysLeft><Clock size={7} strokeWidth={2.5} />276d</DaysLeft>
            <ChevronDown size={8} strokeWidth={3} color="#6b7785" />
          </TopBar>
          <Main>
            <Heading>Sales Report</Heading>
            <Breadcrumb>
              <a href="#dashboard">Dashboard</a>
              <i>/</i>
              <a href="#sales">Sales Report</a>
            </Breadcrumb>
            <FilterCard />
            <Period><Calendar size={11} />01 Jul 2026 — 31 Jul 2026</Period>
            <CurrencyRow><Currency>ZWG</Currency>01 Jul – 31 Jul 2026</CurrencyRow>
            <Stats>
              {STATS.map(({label, value, note, good}) => (
                <Stat key={label}>
                  <StatLabel>{label}</StatLabel>
                  <StatValue $good={good}>{value}</StatValue>
                  {note}
                </Stat>
              ))}
            </Stats>
            <Panels>
              <ProductsPanel />
              <PaymentsPanel />
              <Panel><PanelTitle icon={User} count={1}>Cashiers</PanelTitle></Panel>
              <Panel><PanelTitle icon={HomeIcon} count={1}>Branches</PanelTitle></Panel>
            </Panels>
          </Main>
        </Page>
        <ScrollTrack $width={5} $top={5}><ScrollThumb $size={49} $round={2} /></ScrollTrack>
      </Shell>
      <Desktop />
    </Screen>
  );
}
